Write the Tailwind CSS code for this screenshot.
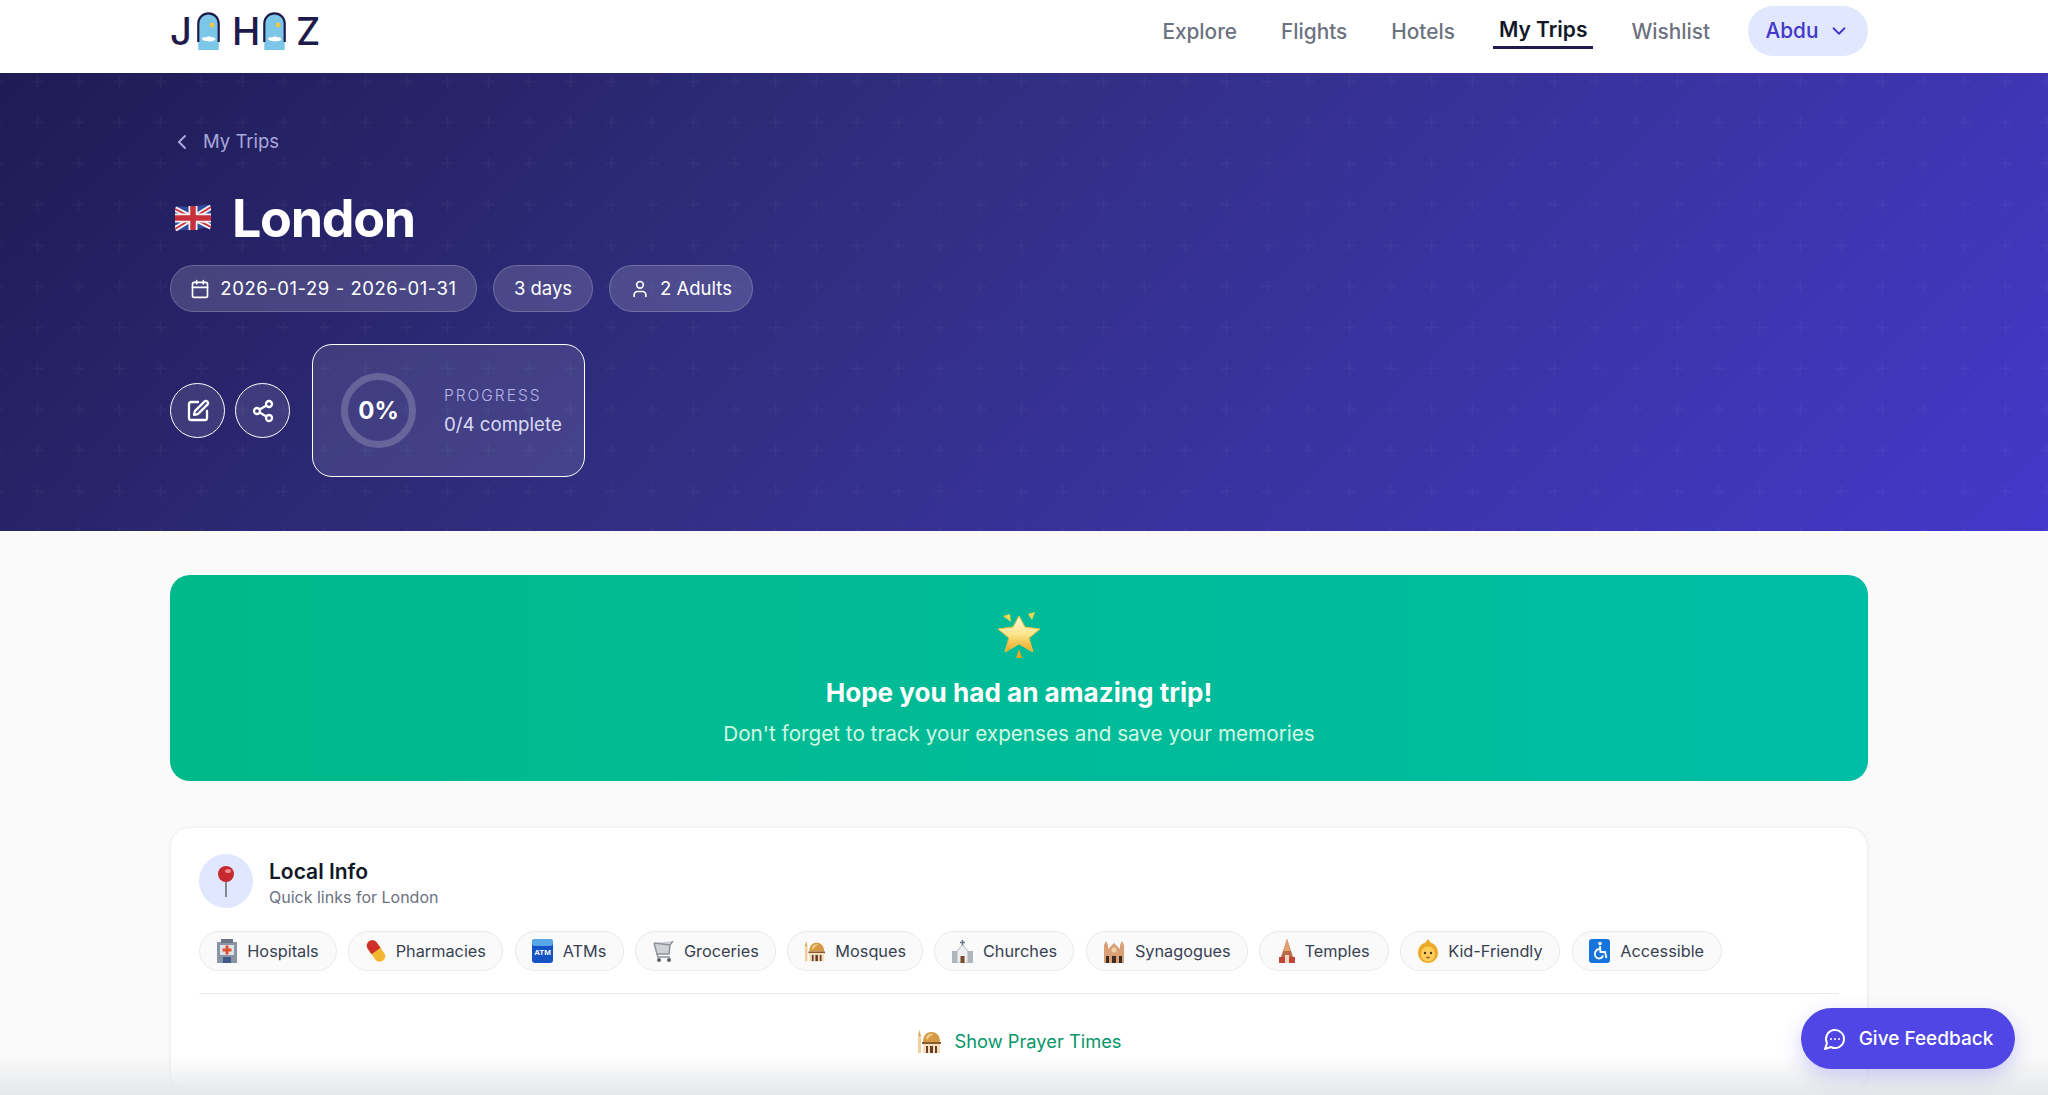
<!DOCTYPE html>
<html lang="en">
<head>
  <meta charset="UTF-8" />
  <meta name="viewport" content="width=device-width, initial-scale=1" />
  <title>Jahaz - London</title>
  <script src="https://cdn.jsdelivr.net/npm/@tailwindcss/browser@4"></script>
</head>
<body class="relative h-[1095px] overflow-hidden bg-[#fafafa] font-['Inter',sans-serif] antialiased">

  <!-- shared emoji drawings -->
  <svg class="hidden">
    <symbol id="mosque" viewBox="0 0 24 24">
      <rect x="1" y="5" width="3" height="18" fill="#f0cfa0"/>
      <path d="M2.500 0 L4 6 H1 Z" fill="#d9a860"/>
      <path d="M6 12 C6 5 10 2 14.500 2 C19 2 23 5 23 12 Z" fill="#d49a45"/>
      <path d="M9 7 C11 4 14 3 17 4 C14 5 12 7 10 10 Z" fill="#f0d090"/>
      <rect x="5" y="12" width="19" height="2" fill="#8a5a30"/>
      <rect x="6" y="14" width="17" height="9" fill="#f3dfc0"/>
      <rect x="9" y="16" width="2" height="7" fill="#6b3d20"/>
      <rect x="13" y="16" width="3" height="7" fill="#6b3d20"/>
      <rect x="18" y="16" width="2" height="7" fill="#6b3d20"/>
    </symbol>
  </svg>

  <!-- Nav -->
  <header class="h-[73px] bg-white">
    <div class="ml-[170px] flex h-full w-[1698px] items-center justify-between pb-[11px]">
      <a class="flex h-[38px] items-center text-[38px] leading-none font-medium text-[#1e1b4b]">
        <span class="w-[17px]">J</span>
        <svg class="ml-[10px]" width="23" height="38" viewBox="0 0 23 38">
          <path d="M1.300 38 V11.500 A10.200 10.200 0 0 1 21.700 11.500 V38 Z" fill="#7cc6e8"/>
          <path d="M1.300 30 V11.500 A10.200 10.200 0 0 1 21.700 11.500 V30" fill="none" stroke="#1e1b4b" stroke-width="2.200"/>
          <path d="M5 27 C5 25 8 25 9 25.500 C10 24 14 24 15 25.500 C17 25 19 26 18 28 C17 30 6 30 5 27 Z" fill="#fff"/>
          <circle cx="15" cy="13" r="2.400" fill="#f5c842"/>
        </svg>
        <span class="ml-[12px] w-[27px]">H</span>
        <svg class="ml-[4px]" width="23" height="38" viewBox="0 0 23 38">
          <path d="M1.300 38 V11.500 A10.200 10.200 0 0 1 21.700 11.500 V38 Z" fill="#7cc6e8"/>
          <path d="M1.300 30 V11.500 A10.200 10.200 0 0 1 21.700 11.500 V30" fill="none" stroke="#1e1b4b" stroke-width="2.200"/>
          <path d="M5 27 C5 25 8 25 9 25.500 C10 24 14 24 15 25.500 C17 25 19 26 18 28 C17 30 6 30 5 27 Z" fill="#fff"/>
          <circle cx="15" cy="13" r="2.400" fill="#f5c842"/>
        </svg>
        <span class="ml-[10px]">Z</span>
      </a>
      <nav class="flex items-center gap-[32px] text-[20.800px] font-medium text-[#6b7280]">
        <a class="translate-y-[1px] px-[6px]">Explore</a>
        <a class="translate-y-[1px] px-[6px]">Flights</a>
        <a class="translate-y-[1px] px-[6px]">Hotels</a>
        <a class="relative -translate-y-[1px] px-[6px] text-[21px] font-semibold text-[#111827]">My Trips<span class="absolute right-0 -bottom-[3px] left-0 h-[3px] bg-[#1e1b4b]"></span></a>
        <a class="translate-y-[1px] px-[6px]">Wishlist</a>
        <button class="flex h-[50px] w-[120px] items-center justify-center gap-[10px] rounded-full bg-[#e0e7ff] text-[#4338ca]">
          Abdu
          <svg width="22" height="22" viewBox="0 0 24 24" fill="none" stroke="currentColor" stroke-width="2" stroke-linecap="round" stroke-linejoin="round"><path d="m6 9 6 6 6-6"/></svg>
        </button>
      </nav>
    </div>
  </header>

  <!-- Hero -->
  <section class="relative h-[458px] overflow-hidden bg-linear-135 from-[#1f1b55] via-[#312e81] via-40% to-[#4338ca]">
    <svg class="absolute inset-0" width="100%" height="100%">
      <defs>
        <pattern id="plus" x="17" y="-12" width="41" height="41" patternUnits="userSpaceOnUse">
          <path d="M20.500 14.500 V26.500 M14.500 20.500 H26.500" stroke="#fff" stroke-opacity="0.035" stroke-width="1.500"/>
        </pattern>
      </defs>
      <rect width="100%" height="100%" fill="url(#plus)"/>
    </svg>
    <div class="relative ml-[170px] w-[1698px] pt-[56px]">
      <a class="flex h-[25px] items-center text-[18.500px] text-[#a9a7dc]">
        <svg width="24" height="24" viewBox="0 0 24 24" fill="none" stroke="currentColor" stroke-width="2" stroke-linecap="round" stroke-linejoin="round"><path d="m15 18-6-6 6-6"/></svg>
        <span class="ml-[9px]">My Trips</span>
      </a>
      <div class="mt-[34px] flex h-[62px] items-center">
        <svg class="ml-[5px] -translate-y-[2px]" width="36" height="27" viewBox="0 0 36 27">
          <path d="M0 3 C6 1 12 4 18 3 C24 2 30 0 36 1 V24 C30 23 24 25 18 26 C12 27 6 25 0 27 Z" fill="#2f4a9c"/>
          <path d="M0 5 L36 23 M36 3 L0 25" stroke="#f1eff0" stroke-width="5.500"/>
          <path d="M0 5 L36 23 M36 3 L0 25" stroke="#c8303c" stroke-width="1.800"/>
          <path d="M18 2 V26 M0 14 H36" stroke="#f1eff0" stroke-width="9"/>
          <path d="M18 2 V26 M0 14 H36" stroke="#c8303c" stroke-width="5.500"/>
        </svg>
        <h1 class="ml-[21px] text-[52px] leading-none font-bold tracking-[-1.300px] text-white">London</h1>
      </div>
      <div class="mt-[15px] flex gap-[16px] text-[18.500px] text-white">
        <div class="flex h-[47px] w-[307px] items-center justify-center gap-[10px] rounded-full border border-white/20 bg-white/15">
          <svg width="20" height="20" viewBox="0 0 24 24" fill="none" stroke="currentColor" stroke-width="2" stroke-linecap="round" stroke-linejoin="round"><path d="M8 2v4"/><path d="M16 2v4"/><rect width="18" height="18" x="3" y="4" rx="2"/><path d="M3 10h18"/></svg>
          <span class="tracking-[0.550px]">2026-01-29 - 2026-01-31</span>
        </div>
        <div class="flex h-[47px] w-[100px] items-center justify-center rounded-full border border-white/20 bg-white/15">3 days</div>
        <div class="flex h-[47px] w-[144px] items-center justify-center gap-[10px] rounded-full border border-white/20 bg-white/15">
          <svg width="20" height="20" viewBox="0 0 24 24" fill="none" stroke="currentColor" stroke-width="2" stroke-linecap="round" stroke-linejoin="round"><path d="M19 21v-2a4 4 0 0 0-4-4H9a4 4 0 0 0-4 4v2"/><circle cx="12" cy="7" r="4"/></svg>
          2 Adults
        </div>
      </div>
      <div class="mt-[32px] flex items-center">
        <button class="flex h-[55px] w-[55px] items-center justify-center rounded-full border-[1.500px] border-white bg-white/10 text-white">
          <svg width="24" height="24" viewBox="0 0 24 24" fill="none" stroke="currentColor" stroke-width="2.300" stroke-linecap="round" stroke-linejoin="round"><path d="M12 3H5a2 2 0 0 0-2 2v14a2 2 0 0 0 2 2h14a2 2 0 0 0 2-2v-7"/><path d="M18.375 2.625a1 1 0 0 1 3 3l-9.013 9.014a2 2 0 0 1-.853.505l-2.873.84a.5.5 0 0 1-.62-.62l.84-2.873a2 2 0 0 1 .506-.852z"/></svg>
        </button>
        <button class="ml-[10px] flex h-[55px] w-[55px] items-center justify-center rounded-full border-[1.500px] border-white bg-white/10 text-white">
          <svg width="24" height="24" viewBox="0 0 24 24" fill="none" stroke="currentColor" stroke-width="2.300" stroke-linecap="round" stroke-linejoin="round"><circle cx="18" cy="5" r="3"/><circle cx="6" cy="12" r="3"/><circle cx="18" cy="19" r="3"/><path d="m8.590 13.510 6.830 3.980"/><path d="m15.410 6.510-6.820 3.980"/></svg>
        </button>
        <div class="ml-[22px] flex h-[133px] w-[273px] items-center rounded-[20px] border-[1.500px] border-white bg-white/10 pl-[28px]">
          <div class="flex h-[75px] w-[75px] items-center justify-center rounded-full border-[7px] border-white/20 text-[24px] font-bold text-white">0%</div>
          <div class="ml-[28px] translate-y-[1px]">
            <div class="text-[15.500px] leading-[20px] font-light tracking-[2px] text-[#b9b6e6]">PROGRESS</div>
            <div class="mt-[6px] text-[18.700px] leading-[26px] text-[#dbd9f5]">0/4 complete</div>
          </div>
        </div>
      </div>
    </div>
  </section>

  <main class="ml-[170px] w-[1698px]">
    <!-- Completed banner -->
    <section class="mt-[44px] flex h-[206px] flex-col items-center rounded-[20px] bg-linear-to-r from-[#00b98a] to-[#00bda5] pt-[36px]">
      <svg width="46" height="48" viewBox="0 0 46 48">
        <defs>
          <linearGradient id="star" x1="0" y1="0" x2="0" y2="1">
            <stop offset="0" stop-color="#fff8dc"/>
            <stop offset="0.500" stop-color="#fbe58e"/>
            <stop offset="1" stop-color="#eda51c"/>
          </linearGradient>
        </defs>
        <path d="M23 5 L29 16 L44 18 L33 27 L37 41 L23 33 L9 41 L13 27 L2 18 L17 16 Z" fill="url(#star)" stroke="#f0c040" stroke-linejoin="round"/>
        <path d="M7 5 L14 3 L15 11 Z M32 3 L39 1 L36 9 Z" fill="#f2d850"/>
        <path d="M23 38 L26 47 H20 Z" fill="#eda51c"/>
      </svg>
      <h2 class="mt-[17px] text-[26.100px] leading-[34px] font-bold text-white">Hope you had an amazing trip!</h2>
      <p class="mt-[10px] text-[20.700px] leading-[28px] text-[#d1fae5]">Don't forget to track your expenses and save your memories</p>
    </section>

    <!-- Local info -->
    <section class="mt-[46px] h-[265px] rounded-[20px] border border-[#eef0f2] bg-white px-[28px] pt-[26px] shadow-[0_1px_4px_rgba(0,0,0,0.05)]">
      <div class="flex items-center">
        <div class="flex h-[54px] w-[54px] items-center justify-center rounded-full bg-[#e0e7ff]">
          <svg width="18" height="32" viewBox="0 0 18 32"><rect x="8" y="14" width="2" height="18" fill="#808890"/><circle cx="9" cy="9" r="8" fill="#c62a30"/><ellipse cx="11" cy="6" rx="3" ry="2" fill="#ee8a88"/></svg>
        </div>
        <div class="ml-[16px] translate-y-[1.500px]">
          <h3 class="text-[21px] leading-[28px] font-semibold text-[#111827]">Local Info</h3>
          <p class="text-[16px] leading-[22px] text-[#6b7280]">Quick links for London</p>
        </div>
      </div>
      <div class="mt-[23px] flex gap-[11.300px] text-[16.300px] text-[#374151]">
        <a class="flex h-[40px] w-[138px] items-center justify-center gap-[10px] rounded-full border border-[#e9eaec] bg-[#fafafa]">
          <svg width="20" height="24" viewBox="0 0 20 24"><rect y="3" width="20" height="21" fill="#8a94a4"/><rect x="4" width="12" height="4" fill="#6b7484"/><rect x="3" y="6" width="14" height="10" fill="#dfe3e8"/><path d="M10 6.500 V15.500 M5.500 11 H14.500" stroke="#e0502c" stroke-width="3"/><rect x="6" y="18" width="8" height="6" fill="#3f5a88"/></svg>
          Hospitals
        </a>
        <a class="flex h-[40px] w-[155px] items-center justify-center gap-[10px] rounded-full border border-[#e9eaec] bg-[#fafafa]">
          <svg width="20" height="24" viewBox="0 0 20 24"><g transform="rotate(-35 10 12)"><rect x="4.500" y="0" width="11" height="24" rx="5.500" fill="#f2b632"/><path d="M4.500 12 V5.500 A5.500 5.500 0 0 1 15.500 5.500 V12 Z" fill="#cf2f2a"/></g></svg>
          Pharmacies
        </a>
        <a class="flex h-[40px] w-[109px] items-center justify-center gap-[10px] rounded-full border border-[#e9eaec] bg-[#fafafa]">
          <svg width="21" height="24" viewBox="0 0 21 24"><rect width="21" height="24" rx="3" fill="#1553c4"/><rect width="21" height="7" rx="3" fill="#58a8e8"/><text x="10.500" y="16" text-anchor="middle" font-family="Liberation Sans" font-size="8" font-weight="700" fill="#fff">ATM</text></svg>
          ATMs
        </a>
        <a class="flex h-[40px] w-[141px] items-center justify-center gap-[10px] rounded-full border border-[#e9eaec] bg-[#fafafa]">
          <svg width="22" height="21" viewBox="0 0 22 21"><path d="M2 2 L18 4 L21 0 M2 2 L5 13 H17 L18 4" fill="#cfd3d8" stroke="#8d939b" stroke-width="1.500"/><path d="M5 13 L6 16 H18" fill="none" stroke="#8d939b" stroke-width="1.500"/><circle cx="7" cy="19" r="2" fill="#5b6068"/><circle cx="17" cy="19" r="2" fill="#5b6068"/></svg>
          Groceries
        </a>
        <a class="flex h-[40px] w-[136px] items-center justify-center gap-[10px] rounded-full border border-[#e9eaec] bg-[#fafafa]">
          <svg width="21" height="21"><use href="#mosque"/></svg>
          Mosques
        </a>
        <a class="flex h-[40px] w-[140px] items-center justify-center gap-[10px] rounded-full border border-[#e9eaec] bg-[#fafafa]">
          <svg width="21" height="23" viewBox="0 0 21 23"><path d="M10.500 0 V6 M8 2.500 H13" stroke="#6b7484" stroke-width="1.500"/><path d="M5 11 L10.500 5 L16 11 V23 H5 Z" fill="#eceef0" stroke="#a0a6ae" stroke-width="0.800"/><rect y="11" width="5" height="12" fill="#b0b6be"/><rect x="16" y="11" width="5" height="12" fill="#b0b6be"/><rect x="8.500" y="16" width="4" height="7" fill="#7a4a28"/></svg>
          Churches
        </a>
        <a class="flex h-[40px] w-[162px] items-center justify-center gap-[10px] rounded-full border border-[#e9eaec] bg-[#fafafa]">
          <svg width="22" height="24" viewBox="0 0 22 24"><path d="M1 24 V6 L3 2 L5 6 V10 L11 4 L17 10 V6 L19 2 L21 6 V24 Z" fill="#d9a078"/><circle cx="11" cy="11" r="2.500" fill="#f0d0a8"/><rect x="9" y="17" width="4" height="7" fill="#3a2a20"/><rect x="3" y="17" width="3" height="7" fill="#3a2a20"/><rect x="16" y="17" width="3" height="7" fill="#3a2a20"/></svg>
          Synagogues
        </a>
        <a class="flex h-[40px] w-[130px] items-center justify-center gap-[10px] rounded-full border border-[#e9eaec] bg-[#fafafa]">
          <svg width="16" height="24" viewBox="0 0 16 24"><path d="M8 0 L12 12 L16 24 H0 L4 12 Z" fill="#b86a4a"/><path d="M8 0 L12 12 H4 Z" fill="#e0a070"/><rect x="0" y="18" width="16" height="6" fill="#c0453a"/><rect x="6" y="16" width="4" height="8" fill="#f0d8c0"/></svg>
          Temples
        </a>
        <a class="flex h-[40px] w-[160px] items-center justify-center gap-[10px] rounded-full border border-[#e9eaec] bg-[#fafafa]">
          <svg width="20" height="24" viewBox="0 0 20 24"><path d="M10 0 L13 4 C18 5 20 10 20 14 C20 20 15 24 10 24 C5 24 0 20 0 14 C0 10 2 5 7 4 Z" fill="#eda92a"/><ellipse cx="10" cy="15" rx="7" ry="7.500" fill="#fbcf5c"/><circle cx="7" cy="14" r="1.200" fill="#4a3420"/><circle cx="13" cy="14" r="1.200" fill="#4a3420"/><ellipse cx="10" cy="18.500" rx="2" ry="1" fill="#a8672c"/></svg>
          Kid-Friendly
        </a>
        <a class="flex h-[40px] w-[150px] items-center justify-center gap-[10px] rounded-full border border-[#e9eaec] bg-[#fafafa]">
          <svg width="21" height="24" viewBox="0 0 21 24"><rect width="21" height="24" rx="3" fill="#1575dc"/><circle cx="11" cy="4.500" r="1.800" fill="#fff"/><path d="M11 7 L11.500 13 H16 L17.500 19 M10.500 10 C6 10.500 5 15 6.500 17.500 C8.500 20.500 13 20 14 16.500" fill="none" stroke="#fff" stroke-width="1.800"/></svg>
          Accessible
        </a>
      </div>
      <div class="mt-[22px] border-t border-[#e9eaec]"></div>
      <button class="mt-[34px] flex w-full items-center justify-center gap-[14px] text-[18.300px] font-normal text-[#059669]">
        <svg width="24" height="24"><use href="#mosque"/></svg>
        Show Prayer Times
      </button>
    </section>
  </main>

  <!-- soft fade along the fold -->
  <div class="pointer-events-none absolute right-0 bottom-0 left-0 h-[40px] bg-linear-to-b from-transparent to-[#e6e8ea]"></div>

  <button class="absolute right-[33px] bottom-[26px] flex h-[61px] w-[214px] items-center justify-center gap-[12px] rounded-full bg-[#4f46e5] pt-[1px] text-[19px] font-medium text-white shadow-[0_8px_20px_rgba(79,70,229,0.25)]">
    <svg width="24" height="24" viewBox="0 0 24 24" fill="none" stroke="currentColor" stroke-width="2" stroke-linecap="round" stroke-linejoin="round"><path d="M7.900 20A9 9 0 1 0 4 16.100L2 22Z"/><path d="M8 12h.010"/><path d="M12 12h.010"/><path d="M16 12h.010"/></svg>
    Give Feedback
  </button>
</body>
</html>
